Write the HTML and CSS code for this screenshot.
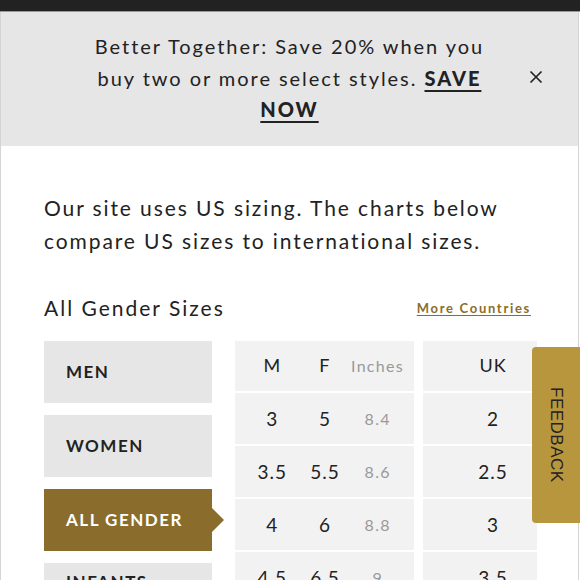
FILE: index.html
```html
<!DOCTYPE html>
<html>
<head>
<meta charset="utf-8">
<link rel="stylesheet" href="styles.css">
</head>
<body>
<div class="topbar"></div>
<div class="page">
  <div class="banner">
    <p class="banner-text">Better Together: Save 20% when you buy two or more select styles. <a class="banner-link">SAVE NOW</a></p>
    <svg class="close" width="14" height="14" viewBox="0 0 14 14"><path d="M1.5 1.5 L12.5 12.5 M12.5 1.5 L1.5 12.5" stroke="#222" stroke-width="1.7" fill="none"/></svg>
  </div>
  <div class="content">
    <p class="intro">Our site uses US sizing. The charts below compare US sizes to international sizes.</p>
    <div class="heading-row">
      <h2 class="heading">All Gender Sizes</h2>
      <a class="more">More Countries</a>
    </div>
    <div class="chart">
      <div class="tabs">
        <div class="tab">MEN</div>
        <div class="tab">WOMEN</div>
        <div class="tab active">ALL GENDER</div>
        <div class="tab last">INFANTS</div>
      </div>
      <div class="group us">
        <div class="row head"><span>M</span><span>F</span><span class="inch">Inches</span></div>
        <div class="row"><span>3</span><span>5</span><span class="inch">8.4</span></div>
        <div class="row"><span>3.5</span><span>5.5</span><span class="inch">8.6</span></div>
        <div class="row"><span>4</span><span>6</span><span class="inch">8.8</span></div>
        <div class="row"><span>4.5</span><span>6.5</span><span class="inch">9</span></div>
      </div>
      <div class="group uk">
        <div class="row head"><span>UK</span></div>
        <div class="row"><span>2</span></div>
        <div class="row"><span>2.5</span></div>
        <div class="row"><span>3</span></div>
        <div class="row"><span>3.5</span></div>
      </div>
    </div>
  </div>
</div>
<div class="feedback">FEEDBACK</div>
</body>
</html>
```
FILE: styles.css
```css
html, body {
  margin: 0;
  padding: 0;
  height: 580px;
  overflow: hidden;
  background: #fff;
}
body {
  font-family: "Lato", "Liberation Sans", sans-serif;
  color: #222;
}
.topbar {
  height: 11px;
  background: #222;
  border-bottom: 1px solid #9a9a9a;
}
.page {
  border-left: 1px solid #d4d4d4;
  border-right: 1px solid #d4d4d4;
  width: 577px;
  height: 600px;
}
.banner {
  background: #e6e6e6;
  height: 134px;
  display: grid;
  grid-template-columns: 1fr 400px 1fr;
  align-items: center;
}
.banner-text {
  grid-column: 2;
  margin: -1px 0 0;
  text-align: center;
  font-size: 20px;
  line-height: 31.5px;
  letter-spacing: 1.95px;
}
.banner-link {
  font-weight: 900;
  text-decoration: underline;
  text-decoration-thickness: 2px;
  text-underline-offset: 4px;
}
.close {
  grid-column: 3;
  justify-self: center;
  margin-top: -4px;
  margin-right: -4px;
}
.content {
  padding: 0 41px 0 43px;
}
.intro {
  margin: 45px 0 0;
  font-size: 21px;
  line-height: 33px;
  letter-spacing: 1.9px;
}
.heading-row {
  display: flex;
  justify-content: space-between;
  align-items: center;
  margin-top: 35px;
  height: 30px;
}
.heading {
  margin: 0;
  font-size: 21px;
  font-weight: 400;
  letter-spacing: 2px;
}
.more {
  color: #8a6d2b;
  font-size: 13px;
  font-weight: 700;
  letter-spacing: 1.7px;
  text-decoration: underline;
  text-underline-offset: 2px;
  margin-right: 6px;
  margin-top: 2px;
}
.chart {
  display: flex;
  align-items: flex-start;
  margin-top: 19px;
}
.tabs {
  width: 168px;
  flex-shrink: 0;
  display: flex;
  flex-direction: column;
  gap: 12px;
  margin-right: 23px;
}
.tab {
  height: 62px;
  background: #e6e6e6;
  display: flex;
  align-items: center;
  padding-left: 22px;
  padding-bottom: 1px;
  font-size: 17px;
  font-weight: 700;
  letter-spacing: 1.5px;
  position: relative;
  box-sizing: border-box;
}
.tab.last {
  align-items: flex-start;
  padding-top: 8px;
}
.tab.active {
  background: #8a6d2d;
  color: #fff;
}
.tab.active::after {
  content: "";
  position: absolute;
  right: -12px;
  top: 50%;
  margin-top: -12px;
  border-left: 12px solid #8a6d2d;
  border-top: 12px solid transparent;
  border-bottom: 12px solid transparent;
}
.group {
  display: flex;
  flex-direction: column;
  gap: 2px;
  flex-shrink: 0;
}
.group.us {
  width: 179px;
  margin-right: 9px;
}
.group.uk {
  width: 114px;
}
.row {
  height: 51px;
  background: #f2f2f2;
  display: flex;
  align-items: center;
  font-size: 19px;
  letter-spacing: 1px;
}
.row.head {
  height: 50px;
  font-size: 18px;
  padding-bottom: 2px;
  box-sizing: border-box;
}
.us .row {
  padding-left: 11px;
  padding-right: 10px;
}
.us .row span {
  flex: 1;
  text-align: center;
}
.uk .row {
  justify-content: flex-end;
  padding-right: 18px;
}
.uk .row span {
  width: 52px;
  text-align: center;
}
.inch {
  color: #999;
  font-size: 16px;
  letter-spacing: 1.3px;
}
.feedback {
  position: fixed;
  right: 0;
  top: 347px;
  width: 48px;
  height: 176px;
  background: #b8963e;
  border-radius: 4px 0 0 4px;
  writing-mode: vertical-rl;
  display: flex;
  align-items: center;
  justify-content: center;
  font-family: "Liberation Sans", sans-serif;
  font-size: 17px;
  color: #222;
  letter-spacing: 0.5px;
}
```
